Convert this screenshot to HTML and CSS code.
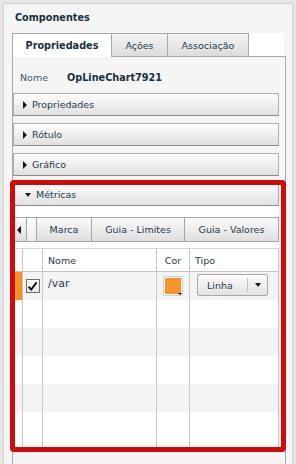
FILE: index.html
```html
<!DOCTYPE html>
<html>
<head>
<meta charset="utf-8">
<link rel="stylesheet" href="styles.css">
</head>
<body>
<div class="panel">
  <div class="title">Componentes</div>
  <div class="wrap">
    <div class="tabs">
      <div class="tab active">Propriedades</div>
      <div class="tab t-acoes">Ações</div>
      <div class="tab t-assoc">Associação</div>
    </div>
    <div class="tabbody">
      <div class="namerow"><span class="lbl">Nome</span><span class="val">OpLineChart7921</span></div>
      <div class="acc"><span class="tri-r"></span><span>Propriedades</span></div>
      <div class="acc"><span class="tri-r"></span><span>Rótulo</span></div>
      <div class="acc"><span class="tri-r"></span><span>Gráfico</span></div>
      <div class="acc open"><span class="tri-d"></span><span>Métricas</span></div>
      <div class="accbody">
        <div class="subtabs">
          <div class="sbtn arrow"><span class="tri-l"></span></div>
          <div class="sbtn blank"></div>
          <div class="sbtn w-marca">Marca</div>
          <div class="sbtn w-lim">Guia - Limites</div>
          <div class="sbtn w-val">Guia - Valores</div>
        </div>
        <div class="grid">
          <div class="row head">
            <div class="c c0"></div><div class="c c1"></div><div class="c c2">Nome</div><div class="c c3">Cor</div><div class="c c4">Tipo</div>
          </div>
          <div class="row odd">
            <div class="c c0 sel"></div>
            <div class="c c1"><span class="chk"><svg width="11" height="11" viewBox="0 0 11 11"><path d="M1.6 5.6 L4.2 8.6 L9.6 1.4" fill="none" stroke="#111" stroke-width="1.9"/></svg></span></div>
            <div class="c c2 txt">/var</div>
            <div class="c c3"><span class="swatch"><span class="fill"></span><span class="caret"></span></span></div>
            <div class="c c4"><div class="dd"><span class="dd-l">Linha</span><span class="dd-r"><span class="tri-dd"></span></span></div></div>
          </div>
          <div class="row"><div class="c"></div><div class="c"></div><div class="c"></div><div class="c"></div><div class="c"></div></div>
          <div class="row odd"><div class="c"></div><div class="c"></div><div class="c"></div><div class="c"></div><div class="c"></div></div>
          <div class="row"><div class="c"></div><div class="c"></div><div class="c"></div><div class="c"></div><div class="c"></div></div>
          <div class="row odd"><div class="c"></div><div class="c"></div><div class="c"></div><div class="c"></div><div class="c"></div></div>
          <div class="row last"><div class="c"></div><div class="c"></div><div class="c"></div><div class="c"></div><div class="c"></div></div>
        </div>
      </div>
    </div>
  </div>
  <div class="hl"></div>
</div>
</body>
</html>
```
FILE: styles.css
```css
body {
  margin: 0;
  background: #e6e6e6;
  font-family: "DejaVu Sans", sans-serif;
  font-size: 9.5px;
  color: #2b3a48;
}
.panel {
  margin: 3px 3px 0;
  height: 461px;
  box-sizing: border-box;
  border: 1px solid #d3d3d3;
  border-bottom: none;
  background: #f5f5f5;
  display: flex;
  flex-direction: column;
  position: relative;
}
.title {
  height: 29px;
  flex: none;
  display: flex;
  align-items: center;
  padding: 0 0 3px 11px;
  box-sizing: border-box;
  font-weight: bold;
  font-size: 9.7px;
  color: #1b2f3c;
}
.wrap {
  flex: 1;
  display: flex;
  flex-direction: column;
  margin: 0 6px 0 8px;
}
.tabs {
  height: 23px;
  flex: none;
  display: flex;
  align-items: flex-start;
  background: #fff;
  margin-right: 2px;
}
.tab {
  box-sizing: border-box;
  height: 23px;
  border: 1px solid #a8a8a8;
  border-bottom: none;
  border-left: none;
  display: flex;
  align-items: center;
  justify-content: center;
  background: linear-gradient(#f4f4f4, #dcdcdc);
  color: #2b3a48;
}
.tab.active {
  width: 100px;
  height: 24px;
  border-left: 1px solid #a8a8a8;
  background: #fff;
  font-weight: bold;
  font-size: 9.7px;
  color: #1b2f3c;
  position: relative;
  z-index: 1;
}
.t-acoes { width: 56px; }
.t-assoc { width: 81px; }
.tabbody {
  flex: 1;
  border: 1px solid #a8a8a8;
  border-bottom: none;
  background: #f5f5f5;
  display: flex;
  flex-direction: column;
}
.namerow {
  height: 36px;
  flex: none;
  box-sizing: border-box;
  padding: 4px 0 0 7px;
  display: flex;
  align-items: center;
}
.lbl { width: 47px; color: #4a5561; }
.val { font-weight: bold; font-size: 9.7px; color: #1b2f3c; }
.acc {
  box-sizing: border-box;
  width: 266px;
  height: 23px;
  flex: none;
  margin-bottom: 7px;
  border: 1px solid #b0b0b0;
  border-bottom-color: #8c8c8c;
  background: linear-gradient(#fdfdfd, #e0e0e0);
  display: flex;
  align-items: center;
  padding-left: 9px;
  gap: 5px;
  color: #2b3a48;
}
.acc.open { padding-left: 11px; margin-bottom: 0; }
.tri-r {
  width: 0; height: 0;
  border-left: 4px solid #1a1a1a;
  border-top: 4px solid transparent;
  border-bottom: 4px solid transparent;
}
.tri-d {
  width: 0; height: 0;
  border-top: 4px solid #1a1a1a;
  border-left: 3px solid transparent;
  border-right: 3px solid transparent;
}
.tri-l {
  width: 0; height: 0;
  border-right: 4px solid #111;
  border-top: 4px solid transparent;
  border-bottom: 4px solid transparent;
}
.accbody {
  width: 266px;
  height: 241px;
  flex: none;
  box-sizing: border-box;
  padding-top: 11px;
  background: #fff;
}
.subtabs { display: flex; height: 25px; }
.sbtn {
  box-sizing: border-box;
  height: 25px;
  border: 1px solid #a6a6a6;
  border-left: none;
  background: linear-gradient(#fafafa, #dedede);
  display: flex;
  align-items: center;
  justify-content: center;
  color: #2b3a48;
}
.sbtn.arrow { width: 14px; border-left: 1px solid #a6a6a6; justify-content: flex-start; padding-left: 3px; }
.sbtn.blank { width: 10px; background: linear-gradient(#fdfdfd, #ececec); }
.w-marca { width: 55px; }
.w-lim { width: 93px; }
.w-val { width: 94px; }
.grid {
  margin-top: 6px;
  height: 199px;
  display: flex;
  flex-direction: column;
}
.row {
  display: grid;
  grid-template-columns: 10px 20px 114px 33px 89px;
  height: 28px;
  flex: none;
}
.row.head {
  height: 24px;
  box-sizing: border-box;
  border-top: 1px solid #d6d6d6;
  border-bottom: 1px solid #c4c4c4;
  background: #fff;
}
.row.odd { background: #f4f4f4; }
.row.last { flex: 1; height: auto; }
.c {
  border-right: 1px solid #c9c9c9;
  display: flex;
  align-items: center;
}
.c2 { padding-left: 5px; }
.c3 { justify-content: center; }
.c4 { padding-left: 5px; }
.c0.sel { background: linear-gradient(90deg, #f79a35, #f48a22); }
.c1 { justify-content: center; }
.chk {
  box-sizing: border-box;
  width: 14px;
  height: 14px;
  border: 1px solid #6e6e6e;
  background: linear-gradient(#ffffff, #e6e6e6);
  display: flex;
  align-items: center;
  justify-content: center;
}
.c2.txt {
  align-items: flex-start;
  padding-top: 5px;
  font-size: 11px;
  color: #2b3a48;
}
.swatch {
  position: relative;
  box-sizing: border-box;
  width: 20px;
  height: 20px;
  border: 1px solid #d2d2d2;
  padding: 1px;
  background: #fff;
  display: flex;
}
.fill { flex: 1; background: #f7932f; }
.caret {
  position: absolute;
  right: 0;
  bottom: 0;
  width: 0; height: 0;
  border-top: 2px solid #111;
  border-left: 2px solid transparent;
  border-right: 2px solid transparent;
}
.c4 { align-items: flex-start; padding-top: 2px; padding-left: 7px; }
.row.head .c4 { align-items: center; padding: 0 0 0 5px; }
.dd {
  box-sizing: border-box;
  width: 71px;
  height: 22px;
  border: 1px solid #a8a8a8;
  border-radius: 2px;
  background: linear-gradient(#fcfcfc, #e2e2e2);
  display: flex;
}
.dd-l {
  width: 49px;
  padding-left: 9px;
  box-sizing: border-box;
  display: flex;
  align-items: center;
  color: #2b3a48;
}
.dd-r {
  flex: 1;
  border-left: 1px solid #c4c4c4;
  margin: 3px 0;
  display: flex;
  align-items: center;
  justify-content: center;
}
.tri-dd {
  width: 0; height: 0;
  border-top: 4px solid #1a1a1a;
  border-left: 3px solid transparent;
  border-right: 3px solid transparent;
}
.hl {
  position: absolute;
  left: 6px;
  top: 176px;
  width: 276px;
  height: 272px;
  box-sizing: border-box;
  border: 5px solid #d20a0a;
  border-radius: 4px;
  pointer-events: none;
}
```
